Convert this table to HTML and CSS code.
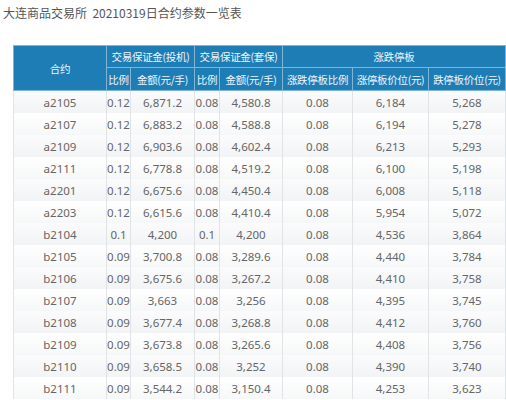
FILE: index.html
```html
<!DOCTYPE html>
<html lang="zh-CN">
<head>
<meta charset="utf-8">
<title>大连商品交易所 合约参数一览表</title>
<link rel="stylesheet" href="styles.css">
</head>
<body>
<div class="title">大连商品交易所&nbsp;&nbsp;20210319日合约参数一览表</div>
<table class="grid">
  <colgroup>
    <col class="c-code"><col class="c-r1"><col class="c-a1"><col class="c-r2"><col class="c-a2"><col class="c-lim"><col class="c-up"><col class="c-down"><col class="c-extra">
  </colgroup>
  <thead>
    <tr class="h1">
      <th rowspan="2">合约</th>
      <th colspan="2">交易保证金(投机)</th>
      <th colspan="2">交易保证金(套保)</th>
      <th colspan="3">涨跌停板</th>
      <th></th>
    </tr>
    <tr class="h2">
      <th>比例</th>
      <th>金额(元/手)</th>
      <th>比例</th>
      <th>金额(元/手)</th>
      <th>涨跌停板比例</th>
      <th>涨停板价位(元)</th>
      <th>跌停板价位(元)</th>
      <th></th>
    </tr>
  </thead>
  <tbody>
    <tr><td>a2105</td><td>0.12</td><td>6,871.2</td><td>0.08</td><td>4,580.8</td><td>0.08</td><td>6,184</td><td>5,268</td><td></td></tr>
    <tr><td>a2107</td><td>0.12</td><td>6,883.2</td><td>0.08</td><td>4,588.8</td><td>0.08</td><td>6,194</td><td>5,278</td><td></td></tr>
    <tr><td>a2109</td><td>0.12</td><td>6,903.6</td><td>0.08</td><td>4,602.4</td><td>0.08</td><td>6,213</td><td>5,293</td><td></td></tr>
    <tr><td>a2111</td><td>0.12</td><td>6,778.8</td><td>0.08</td><td>4,519.2</td><td>0.08</td><td>6,100</td><td>5,198</td><td></td></tr>
    <tr><td>a2201</td><td>0.12</td><td>6,675.6</td><td>0.08</td><td>4,450.4</td><td>0.08</td><td>6,008</td><td>5,118</td><td></td></tr>
    <tr><td>a2203</td><td>0.12</td><td>6,615.6</td><td>0.08</td><td>4,410.4</td><td>0.08</td><td>5,954</td><td>5,072</td><td></td></tr>
    <tr><td>b2104</td><td>0.1</td><td>4,200</td><td>0.1</td><td>4,200</td><td>0.08</td><td>4,536</td><td>3,864</td><td></td></tr>
    <tr><td>b2105</td><td>0.09</td><td>3,700.8</td><td>0.08</td><td>3,289.6</td><td>0.08</td><td>4,440</td><td>3,784</td><td></td></tr>
    <tr><td>b2106</td><td>0.09</td><td>3,675.6</td><td>0.08</td><td>3,267.2</td><td>0.08</td><td>4,410</td><td>3,758</td><td></td></tr>
    <tr><td>b2107</td><td>0.09</td><td>3,663</td><td>0.08</td><td>3,256</td><td>0.08</td><td>4,395</td><td>3,745</td><td></td></tr>
    <tr><td>b2108</td><td>0.09</td><td>3,677.4</td><td>0.08</td><td>3,268.8</td><td>0.08</td><td>4,412</td><td>3,760</td><td></td></tr>
    <tr><td>b2109</td><td>0.09</td><td>3,673.8</td><td>0.08</td><td>3,265.6</td><td>0.08</td><td>4,408</td><td>3,756</td><td></td></tr>
    <tr><td>b2110</td><td>0.09</td><td>3,658.5</td><td>0.08</td><td>3,252</td><td>0.08</td><td>4,390</td><td>3,740</td><td></td></tr>
    <tr><td>b2111</td><td>0.09</td><td>3,544.2</td><td>0.08</td><td>3,150.4</td><td>0.08</td><td>4,253</td><td>3,623</td><td></td></tr>
  </tbody>
</table>
</body>
</html>
```
FILE: styles.css
```css
html, body {
  margin: 0;
  padding: 0;
  background: #ffffff;
  overflow: hidden;
}
body {
  font-family: "Noto Sans", "Noto Sans CJK SC", sans-serif;
  color: #555;
}
.title {
  padding: 4px 0 0 3px;
  height: 45px;
  box-sizing: border-box;
  font-size: 12px;
  line-height: 18px;
  color: #555;
  font-family: "Noto Sans CJK SC", sans-serif;
}
.grid {
  margin-left: 13px;
  border-collapse: collapse;
  table-layout: fixed;
  width: 493px;
}
.c-code { width: 93px; }
.c-r1 { width: 24px; }
.c-a1 { width: 64px; }
.c-r2 { width: 25px; }
.c-a2 { width: 63px; }
.c-lim { width: 70px; }
.c-up { width: 76px; }
.c-down { width: 77px; }
.c-extra { width: 1px; }
.grid th {
  background: #1e7db5;
  color: #eef6fb;
  font-family: "Noto Sans CJK SC", sans-serif;
  font-weight: normal;
  font-size: 10.5px;
  letter-spacing: -0.3px;
  white-space: nowrap;
  overflow: hidden;
  padding: 0;
  border: 1px solid #7fb6d6;
  text-align: center;
}
.grid .h1 th { height: 21px; }
.grid .h2 th { height: 22px; }
.grid td {
  height: 22px;
  padding: 0;
  text-align: center;
  font-size: 11.5px;
  color: #666;
  border-left: 1px solid #e1e4e7;
  border-right: 1px solid #e1e4e7;
  background: linear-gradient(#fbfbfc, #f1f3f5);
  white-space: nowrap;
}
.grid tbody tr:nth-child(even) td {
  background: linear-gradient(#ffffff, #f6f7f8);
}
.grid td:last-child {
  background: #ffffff;
  border-right: none;
}
.grid tbody tr:nth-child(even) td:last-child {
  background: #ffffff;
}
```
